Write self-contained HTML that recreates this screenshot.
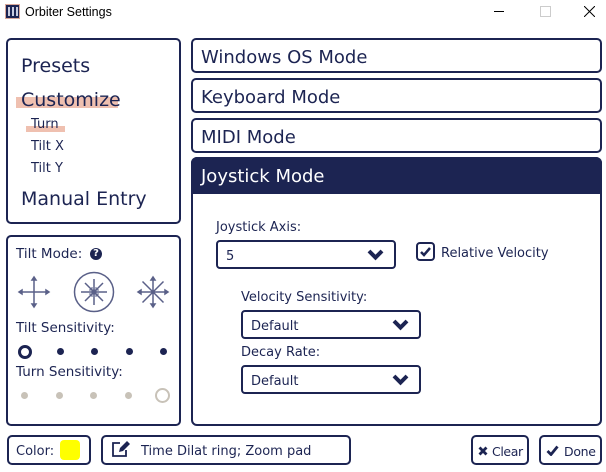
<!DOCTYPE html>
<html><head><style>
*{box-sizing:border-box;margin:0;padding:0}
body{width:606px;height:472px;background:#fff;font-family:"DejaVu Sans","Liberation Sans",sans-serif;color:#1c2452;position:relative;overflow:hidden}
.a{position:absolute}
.box{position:absolute;border:2px solid #1c2452;border-radius:5px;background:#fff}
.t{position:absolute;white-space:nowrap;margin-top:2px}
.sel{position:absolute;border:2px solid #1c2452;border-radius:4px;font-size:13px}
.chev{position:absolute;right:10px;top:7px}
</style></head><body>
<div class="a" style="left:5px;top:4px;width:15px;height:15px;background:#1c2452;border:1px solid #d9a89a"></div>
<div class="a" style="left:8px;top:7px;width:2px;height:9px;background:#c8cce0"></div>
<div class="a" style="left:12px;top:7px;width:2px;height:9px;background:#c8cce0"></div>
<div class="a" style="left:16px;top:7px;width:2px;height:9px;background:#c8cce0"></div>
<div class="t" style="left:25px;top:3px;font-family:'Liberation Sans',sans-serif;font-size:12.5px;color:#000">Orbiter Settings</div>
<div class="a" style="left:494px;top:11px;width:10px;height:1px;background:#000"></div>
<div class="a" style="left:540px;top:6px;width:11px;height:11px;border:1px solid #ccc"></div>
<svg class="a" style="left:584px;top:6px" width="11" height="11"><path d="M0 0L11 11M11 0L0 11" stroke="#000" stroke-width="1"/></svg>

<div class="box" style="left:6px;top:38px;width:175px;height:186px"></div>
<div class="t" style="left:21px;top:53px;font-size:19px">Presets</div>
<div class="a" style="left:16px;top:97px;width:102px;height:11px;background:#efc0b0"></div>
<div class="t" style="left:21px;top:87px;font-size:19px">Customize</div>
<div class="a" style="left:26px;top:126px;width:39px;height:6px;background:#efc0b0"></div>
<div class="t" style="left:31px;top:115px;font-size:13px">Turn</div>
<div class="t" style="left:31px;top:137px;font-size:13px">Tilt X</div>
<div class="t" style="left:31px;top:159px;font-size:13px">Tilt Y</div>
<div class="t" style="left:21px;top:186px;font-size:19px">Manual Entry</div>

<div class="box" style="left:6px;top:235px;width:175px;height:191px"></div>
<div class="t" style="left:16px;top:244px;font-size:13.5px">Tilt Mode:</div>
<div class="a" style="left:90px;top:248px;width:12px;height:12px;border-radius:50%;background:#1c2452;color:#fff;font-size:10px;font-weight:bold;text-align:center;line-height:12px">?</div>
<svg class="a" style="left:14px;top:270px" width="170" height="46" fill="none" stroke="#5a6088" stroke-width="1.5">
 <g transform="translate(20,22)"><path d="M-15 0H15M0 -15V15M-15 0l3-2v4zM15 0l-3-2v4zM0 -15l-2 3h4zM0 15l-2-3h4z"/></g>
 <g transform="translate(80,22)"><circle r="19.5"/><path d="M-13 0H13M0 -13V13M-9 -9L9 9M9 -9L-9 9"/><path d="M-5 -2H5M-5 2H5M-2 -5V5M2 -5V5" stroke-width="1"/></g>
 <g transform="translate(139,22)"><path d="M-15 0H15M0 -15V15M-10.5 -10.5L10.5 10.5M10.5 -10.5L-10.5 10.5M-15 0l3-2v4zM15 0l-3-2v4zM0 -15l-2 3h4zM0 15l-2-3h4z"/></g>
</svg>
<div class="t" style="left:16px;top:318px;font-size:13.5px">Tilt Sensitivity:</div>
<div class="a" style="left:18px;top:345px;width:14px;height:14px;border:3px solid #1c2452;border-radius:50%"></div>
<div class="a" style="left:57px;top:348px;width:7px;height:7px;background:#1c2452;border-radius:50%"></div>
<div class="a" style="left:91px;top:348px;width:7px;height:7px;background:#1c2452;border-radius:50%"></div>
<div class="a" style="left:126px;top:348px;width:7px;height:7px;background:#1c2452;border-radius:50%"></div>
<div class="a" style="left:160px;top:348px;width:7px;height:7px;background:#1c2452;border-radius:50%"></div>
<div class="t" style="left:16px;top:362px;font-size:13.5px">Turn Sensitivity:</div>
<div class="a" style="left:21px;top:392px;width:7px;height:7px;background:#c8c2b8;border-radius:50%"></div>
<div class="a" style="left:56px;top:392px;width:7px;height:7px;background:#c8c2b8;border-radius:50%"></div>
<div class="a" style="left:90px;top:392px;width:7px;height:7px;background:#c8c2b8;border-radius:50%"></div>
<div class="a" style="left:125px;top:392px;width:7px;height:7px;background:#c8c2b8;border-radius:50%"></div>
<div class="a" style="left:155px;top:388px;width:15px;height:15px;border:2.5px solid #c8c2b8;border-radius:50%"></div>

<div class="box" style="left:191px;top:38px;width:411px;height:35px"></div>
<div class="t" style="left:201px;top:45px;font-size:18px">Windows OS Mode</div>
<div class="box" style="left:191px;top:78px;width:411px;height:35px"></div>
<div class="t" style="left:201px;top:85px;font-size:18px">Keyboard Mode</div>
<div class="box" style="left:191px;top:118px;width:411px;height:35px"></div>
<div class="t" style="left:201px;top:125px;font-size:18px">MIDI Mode</div>
<div class="box" style="left:191px;top:157px;width:411px;height:269px;border-radius:6px"></div>
<div class="a" style="left:191px;top:157px;width:411px;height:37px;background:#1c2452;border-radius:6px 6px 0 0"></div>
<div class="t" style="left:201px;top:164px;font-size:18px;color:#fff">Joystick Mode</div>

<div class="t" style="left:216px;top:218px;font-size:13px">Joystick Axis:</div>
<div class="sel" style="left:216px;top:240px;width:180px;height:29px"><span class="t" style="left:8px;top:5px">5</span>
<svg class="chev" width="17" height="12"><path d="M2 2l6.5 6.5L15 2" stroke="#1c2452" stroke-width="4" fill="none"/></svg></div>
<div class="a" style="left:416px;top:242px;width:19px;height:19px;border:2px solid #1c2452;border-radius:4px"></div>
<svg class="a" style="left:419px;top:245px" width="13" height="13"><path d="M2 7l3 3 6-7" stroke="#1c2452" stroke-width="2.5" fill="none"/></svg>
<div class="t" style="left:441px;top:244px;font-size:13px">Relative Velocity</div>

<div class="t" style="left:241px;top:288px;font-size:13px">Velocity Sensitivity:</div>
<div class="sel" style="left:241px;top:310px;width:180px;height:29px"><span class="t" style="left:8px;top:5px">Default</span>
<svg class="chev" width="17" height="12"><path d="M2 2l6.5 6.5L15 2" stroke="#1c2452" stroke-width="4" fill="none"/></svg></div>
<div class="t" style="left:241px;top:343px;font-size:13px">Decay Rate:</div>
<div class="sel" style="left:241px;top:365px;width:180px;height:29px"><span class="t" style="left:8px;top:5px">Default</span>
<svg class="chev" width="17" height="12"><path d="M2 2l6.5 6.5L15 2" stroke="#1c2452" stroke-width="4" fill="none"/></svg></div>

<div class="box" style="left:7px;top:435px;width:84px;height:30px"></div>
<div class="t" style="left:16px;top:442px;font-size:13px">Color:</div>
<div class="a" style="left:60px;top:440px;width:20px;height:20px;background:#ffff00;border-radius:4px"></div>
<div class="box" style="left:101px;top:435px;width:250px;height:30px"></div>
<svg class="a" style="left:111px;top:440px" width="20" height="18"><path d="M9 3H2v13h13v-6" stroke="#1c2452" stroke-width="1.8" fill="none"/><path d="M8 12l1-4 7-7 3 3-7 7z" fill="#1c2452"/></svg>
<div class="t" style="left:141px;top:442px;font-size:13px">Time Dilat ring; Zoom pad</div>
<div class="box" style="left:471px;top:435px;width:58px;height:30px"></div>
<svg class="a" style="left:478px;top:446px" width="10" height="10"><path d="M1.5 1.5l7 7M8.5 1.5l-7 7" stroke="#1c2452" stroke-width="2.8"/></svg>
<div class="t" style="left:492px;top:442px;font-size:12.5px;letter-spacing:-0.4px">Clear</div>
<div class="box" style="left:539px;top:435px;width:63px;height:30px"></div>
<svg class="a" style="left:546px;top:445px" width="13" height="11"><path d="M1.5 6l3.5 3.5 6.5-8" stroke="#1c2452" stroke-width="2.8" fill="none"/></svg>
<div class="t" style="left:564px;top:442px;font-size:12.5px;letter-spacing:-0.3px">Done</div>
</body></html>
